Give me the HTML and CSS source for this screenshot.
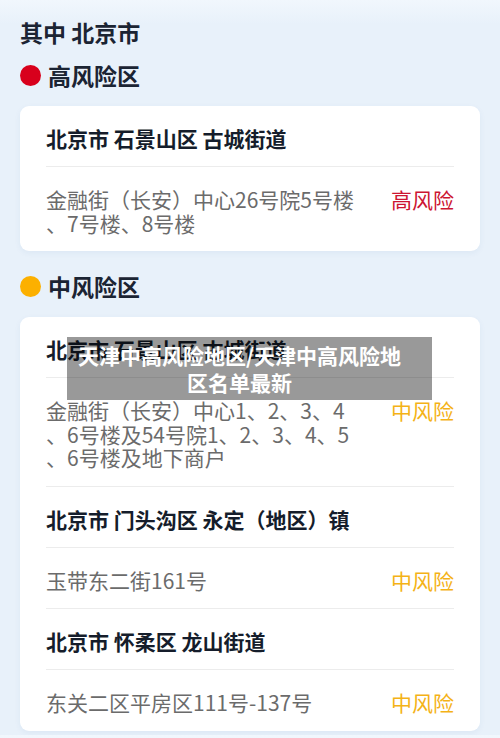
FILE: index.html
```html
<!DOCTYPE html>
<html>

<head>
    <title>北京市 中高风险地区</title>
    <meta charset='UTF-8'>
    <meta name='viewport' content='width=device-width, initial-scale=1.0'>
    <link rel="stylesheet" href="styles.css">
</head>

<body>
    <div class='city'>其中 北京市</div>

    <div class='section'>
        <div class='section-head'><span class='dot red'></span>高风险区</div>
        <div class='card'>
            <div class='row title'>北京市 石景山区 古城街道</div>
            <div class='row item'>
                <div class='addr'>金融街（长安）中心26号院5号楼<br>、7号楼、8号楼</div>
                <div class='level red'>高风险</div>
            </div>
        </div>
    </div>

    <div class='section'>
        <div class='section-head'><span class='dot yellow'></span>中风险区</div>
        <div class='card'>
            <div class='row title'>北京市 石景山区 古城街道</div>
            <div class='row item'>
                <div class='addr'>金融街（长安）中心1、2、3、4<br>、6号楼及54号院1、2、3、4、5<br>、6号楼及地下商户</div>
                <div class='level yellow'>中风险</div>
            </div>
            <div class='row title'>北京市 门头沟区 永定（地区）镇</div>
            <div class='row item'>
                <div class='addr'>玉带东二街161号</div>
                <div class='level yellow'>中风险</div>
            </div>
            <div class='row title'>北京市 怀柔区 龙山街道</div>
            <div class='row item'>
                <div class='addr'>东关二区平房区111号-137号</div>
                <div class='level yellow'>中风险</div>
            </div>
        </div>
    </div>

    <div class='caption'>天津中高风险地区/天津中高风险地区名单最新</div>
</body>

</html>
```

FILE: styles.css
```css
body {
    margin: 0;
    padding: 0 20px 4px;
    background: linear-gradient(#f1f7fd, #e8f1fa 24px);
    font-family: "Noto Sans CJK SC", "Noto Sans", sans-serif;
    color: #1b2433;
}

.city {
    padding-top: 17px;
    font-size: 23px;
    font-weight: bold;
    line-height: 30px;
}

.section {
    margin-top: 8px;
}

.section + .section {
    margin-top: 15px;
}

.section-head {
    display: flex;
    align-items: center;
    gap: 7px;
    height: 40px;
    margin-bottom: 11px;
    font-size: 23px;
    font-weight: bold;
}

.dot {
    width: 21px;
    height: 21px;
    border-radius: 50%;
    display: inline-block;
}

.dot.red {
    background-color: #d8001c;
}

.dot.yellow {
    background-color: #fcb000;
}

.card {
    background-color: #fff;
    border-radius: 9px;
    box-shadow: 0 2px 6px rgba(40, 90, 150, 0.06);
}

.row {
    margin: 0 26px;
    border-bottom: 1px solid #ececec;
}

.row:last-child {
    border-bottom: none;
}

.title {
    padding: 19px 0 15px;
    font-size: 21px;
    font-weight: bold;
    line-height: 26px;
    color: #151d2b;
}

.item {
    display: flex;
    justify-content: space-between;
    align-items: flex-start;
    padding: 21px 0 16px;
    font-size: 21px;
    line-height: 23.5px;
}

.addr {
    flex: 1;
    color: #6b6b6b;
}

.level {
    flex-shrink: 0;
}

.level.red {
    color: #cc1532;
}

.level.yellow {
    color: #f4b217;
}

/* title strip laid over the list */
.caption {
    position: absolute;
    left: 67px;
    top: 337px;
    width: 365px;
    height: 63px;
    box-sizing: border-box;
    padding: 0 28px 0 8px;
    display: flex;
    align-items: center;
    justify-content: center;
    text-align: center;
    background-color: rgba(0, 0, 0, 0.4);
    color: #fff;
    font-size: 21px;
    font-weight: bold;
    line-height: 27px;
}
```
